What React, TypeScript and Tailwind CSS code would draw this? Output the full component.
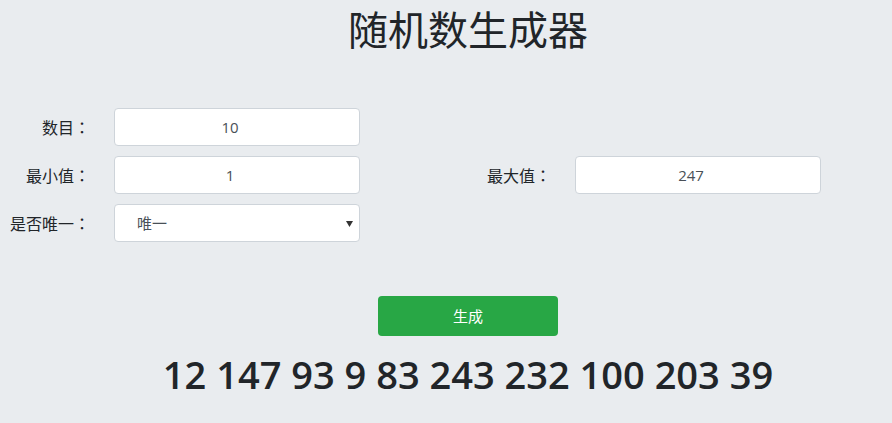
import React from "react";

const font = { fontFamily: '"Noto Sans CJK SC", "Noto Sans", sans-serif' };

function Field({ label, children }: { label: string; children: React.ReactNode }) {
  return (
    <div className="flex w-[461px] shrink-0 items-center">
      <label className="w-[90px] shrink-0 whitespace-nowrap text-right text-[16px] text-[#212529]">
        {label}
        <span style={{ fontFamily: '"Noto Sans CJK TC", sans-serif' }}>：</span>
      </label>
      <div className="ml-[24px] w-[246px] shrink-0">{children}</div>
    </div>
  );
}

function TextInput({ value }: { value: string }) {
  return (
    <input
      readOnly
      value={value}
      className="box-border h-[38px] w-full rounded-[4px] border border-[#ced4da] bg-white pr-[14px] text-center text-[15px] text-[#495057] outline-none"
      style={{ fontFamily: '"Open Sans", "Noto Sans", sans-serif' }}
    />
  );
}

export default function App() {
  return (
    <div className="min-h-[423px] w-[892px] overflow-hidden bg-[#e9ecef] text-[#212529]" style={font}>
      <h1 className="pl-[44px] pt-[4px] text-center text-[40px] font-normal leading-[48px] text-[#212529]">
        随机数生成器
      </h1>
      <div className="mt-[56px] flex flex-col gap-[10px]">
        <div className="flex">
          <Field label="数目">
            <TextInput value="10" />
          </Field>
        </div>
        <div className="flex">
          <Field label="最小值">
            <TextInput value="1" />
          </Field>
          <Field label="最大值">
            <TextInput value="247" />
          </Field>
        </div>
        <div className="flex">
          <Field label="是否唯一">
            <div className="relative flex h-[38px] w-full items-center rounded-[4px] border border-[#ced4da] bg-white pl-[22px] text-[15px] text-[#495057]">
              唯一
              <svg className="absolute right-[6px] top-[16px]" width="7" height="6" viewBox="0 0 7 6">
                <path d="M0 0 H7 L3.5 6 Z" fill="#333" />
              </svg>
            </div>
          </Field>
        </div>
      </div>
      <div className="mt-[54px] flex justify-center pl-[44px]">
        <button className="h-[40px] w-[180px] rounded-[4px] bg-[#28a745] text-[15px] text-white">生成</button>
      </div>
      <div
        className="mt-[14px] pl-[44px] text-center text-[38px] font-semibold leading-[48px] text-[#212529]"
        style={{ fontFamily: '"Open Sans", "Noto Sans", sans-serif' }}
      >
        12 147 93 9 83 243 232 100 203 39
      </div>
    </div>
  );
}
